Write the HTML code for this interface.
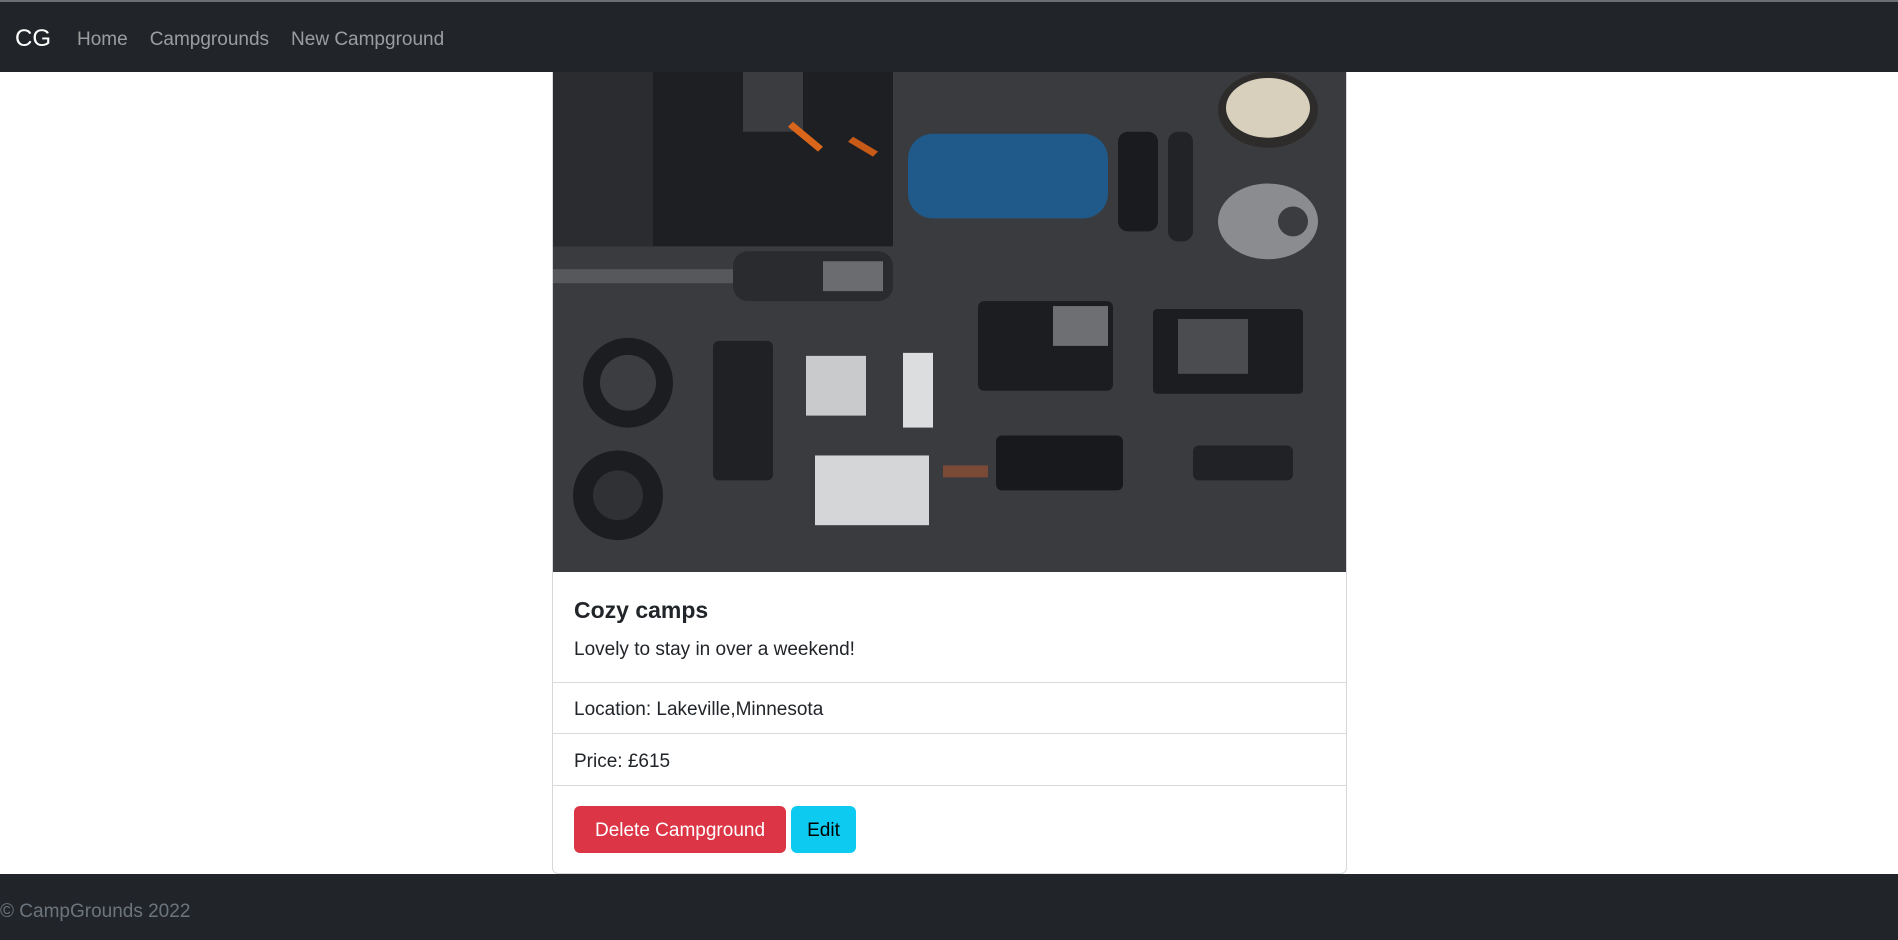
<!DOCTYPE html>
<html><head><meta charset="utf-8"><style>
*{margin:0;padding:0;box-sizing:border-box}
body{width:1898px;height:940px;overflow:hidden;background:#fff;font-family:"Segoe UI","Liberation Sans",sans-serif;color:#212529;position:relative}
.nav{position:absolute;left:0;top:0;width:1898px;height:72px;background:#212529;border-top:2px solid #6c6f73}
.brand{position:absolute;left:15px;top:23px;font-size:24px;color:#fff}
.links{position:absolute;left:77px;top:27px;font-size:19px;color:rgba(255,255,255,.55)}
.links span{margin-right:22px}
.card{position:absolute;left:552px;top:72px;width:795px;height:802px;border:1px solid #d6d8db;border-top:none;border-radius:0 0 6px 6px;overflow:hidden}
.img{position:absolute;left:0;top:0;width:794px;height:500px}
.t{position:absolute;left:21px;font-size:23px;font-weight:600;top:525px}
.d{position:absolute;left:21px;font-size:19px;top:567px}
.hr{position:absolute;left:0;width:794px;height:1px;background:#d9dadc}
.r{position:absolute;left:21px;font-size:19px}
.btn{position:absolute;top:734px;height:47px;border-radius:6px;font-size:19px;line-height:49px;text-align:center}
.foot{position:absolute;left:0;top:874px;width:1898px;height:66px;background:#212529}
.foot span{position:absolute;left:0;top:27px;font-size:19px;color:#6c757d}
</style></head><body>
<div class="nav"><div class="brand">CG</div><div class="links"><span>Home</span><span>Campgrounds</span><span>New Campground</span></div></div>
<div class="card">
<svg class="img" viewBox="0 0 794 502" preserveAspectRatio="none">
<rect width="794" height="502" fill="#393b3f"/>
<rect x="0" y="0" width="340" height="175" fill="#1d1f23"/>
<rect x="0" y="0" width="100" height="175" fill="#2a2c30"/>
<rect x="190" y="0" width="60" height="60" fill="#3a3c40"/>
<path d="M240 50 L270 75 L265 80 L235 55Z" fill="#d9661a"/>
<path d="M300 65 L325 80 L320 85 L295 70Z" fill="#c85a18"/>
<rect x="355" y="62" width="200" height="85" rx="25" fill="#1f5a8a"/>
<rect x="565" y="60" width="40" height="100" rx="10" fill="#1a1b1e"/>
<rect x="615" y="60" width="25" height="110" rx="10" fill="#222326"/>
<ellipse cx="715" cy="38" rx="50" ry="38" fill="#2d2c2a"/>
<ellipse cx="715" cy="36" rx="42" ry="30" fill="#d8d0bc"/>
<ellipse cx="715" cy="150" rx="50" ry="38" fill="#8a8c90"/>
<ellipse cx="740" cy="150" rx="15" ry="15" fill="#3a3c40"/>
<rect x="0" y="198" width="330" height="14" fill="#56585c"/>
<rect x="180" y="180" width="160" height="50" rx="15" fill="#2a2b2e"/>
<rect x="270" y="190" width="60" height="30" fill="#6a6c70"/>
<rect x="425" y="230" width="135" height="90" rx="6" fill="#1c1d20"/>
<rect x="500" y="235" width="55" height="40" fill="#6d6f73"/>
<rect x="600" y="238" width="150" height="85" rx="4" fill="#1c1d20"/>
<rect x="625" y="248" width="70" height="55" fill="#4a4c50"/>
<circle cx="75" cy="312" r="45" fill="#1c1d20"/><circle cx="75" cy="312" r="28" fill="#3b3d41"/>
<circle cx="65" cy="425" r="45" fill="#1c1d20"/><circle cx="65" cy="425" r="25" fill="#2f3135"/>
<rect x="160" y="270" width="60" height="140" rx="6" fill="#202124"/>
<rect x="253" y="285" width="60" height="60" fill="#c9cacc"/>
<rect x="350" y="282" width="30" height="75" fill="#dcdddf"/>
<rect x="262" y="385" width="114" height="70" fill="#d5d6d8"/>
<rect x="390" y="395" width="45" height="12" fill="#7a4a36"/>
<rect x="443" y="365" width="127" height="55" rx="6" fill="#18191c"/>
<rect x="640" y="375" width="100" height="35" rx="6" fill="#202226"/>
</svg>
<div class="t">Cozy camps</div>
<div class="d">Lovely to stay in over a weekend!</div>
<div class="hr" style="top:610px"></div>
<div class="r" style="top:627px">Location: Lakeville,Minnesota</div>
<div class="hr" style="top:661px"></div>
<div class="r" style="top:679px">Price: £615</div>
<div class="hr" style="top:713px"></div>
<div class="btn" style="left:21px;width:212px;background:#dc3545;color:#fff">Delete Campground</div>
<div class="btn" style="left:238px;width:65px;background:#0dcaf0;color:#000">Edit</div>
</div>
<div class="foot"><span>© CampGrounds 2022</span></div>
</body></html>
